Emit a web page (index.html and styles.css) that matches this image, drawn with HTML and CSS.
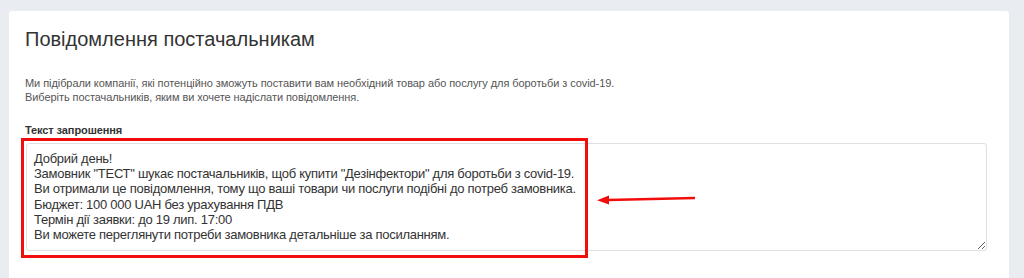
FILE: index.html
```html
<!DOCTYPE html>
<html lang="uk">
<head>
    <meta charset="UTF-8">
    <title>Повідомлення постачальникам</title>
    <link rel="stylesheet" href="styles.css">
</head>
<body>

<div class="card">
    <h1 class="card-title">Повідомлення постачальникам</h1>

    <p class="intro">
        Ми підібрали компанії, які потенційно зможуть поставити вам необхідний товар або послугу для боротьби з covid-19.<br>
        Виберіть постачальників, яким ви хочете надіслати повідомлення.
    </p>

    <div class="field">
        <label for="inviteText" class="field-label">Текст запрошення</label>
        <div class="field-box">
            <textarea id="inviteText" class="invite-text">Добрий день!
Замовник "ТЕСТ" шукає постачальників, щоб купити "Дезінфектори" для боротьби з covid-19.
Ви отримали це повідомлення, тому що ваші товари чи послуги подібні до потреб замовника.
Бюджет: 100 000 UAH без урахування ПДВ
Термін дії заявки: до 19 лип. 17:00
Ви можете переглянути потреби замовника детальніше за посиланням.</textarea>
            <div class="mark-box"></div>
            <svg class="mark-arrow" width="110" height="14" viewBox="0 0 110 14">
                <path d="M12 8 L99 6" stroke="#f20d0d" stroke-width="2.5" fill="none"/>
                <path d="M1 8.2 L13 3.5 L13 12.5 Z" fill="#f20d0d"/>
            </svg>
        </div>
    </div>
</div>

</body>
</html>
```

FILE: styles.css
```css
body {
    margin: 0;
    background: #e9ecf1;
    font-family: 'Liberation Sans', Arial, sans-serif;
    color: #333;
}
.card {
    background: #fff;
    margin: 11px 15px 0 9px;
    padding: 17px 16px 30px 16px;
    border-radius: 3px;
}
.card-title {
    margin: 0;
    font-size: 20px;
    font-weight: normal;
    line-height: 22px;
    color: #333;
}
.intro {
    margin: 26px 0 19px 0;
    font-size: 11px;
    line-height: 14px;
    letter-spacing: -0.07px;
    color: #555;
}
.field-label {
    display: block;
    font-size: 11px;
    font-weight: bold;
    line-height: 14px;
    letter-spacing: -0.1px;
    color: #333;
    margin-bottom: 6px;
}
.field-box {
    position: relative;
    margin-left: 1px;
    margin-right: 6px;
}
.invite-text {
    display: block;
    box-sizing: border-box;
    width: 100%;
    height: 108px;
    padding: 7px 7px;
    border: 1px solid #dfe0e3;
    border-radius: 3px;
    font-family: 'Liberation Sans', Arial, sans-serif;
    font-size: 13px;
    line-height: 15.2px;
    letter-spacing: -0.27px;
    color: #333;
    resize: vertical;
    overflow: hidden;
}
.mark-box {
    position: absolute;
    left: -5px;
    top: -5px;
    width: 561px;
    height: 114px;
    border: 3px solid #f20d0d;
}
.mark-arrow {
    position: absolute;
    left: 570px;
    top: 49px;
}
```
